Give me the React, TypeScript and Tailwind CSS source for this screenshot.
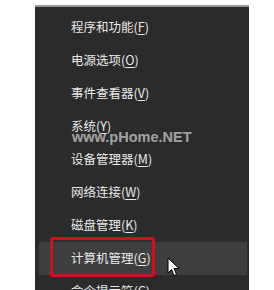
import React from "react";

const items: { label: string; key: string }[] = [
  { label: "程序和功能", key: "F" },
  { label: "电源选项", key: "O" },
  { label: "事件查看器", key: "V" },
  { label: "系统", key: "Y" },
  { label: "设备管理器", key: "M" },
  { label: "网络连接", key: "W" },
  { label: "磁盘管理", key: "K" },
  { label: "计算机管理", key: "G" },
  { label: "命令提示符", key: "C" },
];

export default function App() {
  return (
    <div
      className="relative w-[274px] h-[290px] overflow-hidden bg-white"
      style={{ fontFamily: '"Noto Sans CJK SC", "Liberation Sans", sans-serif' }}
    >
      <div className="ml-[35px] mt-[5px] w-[214px] h-[285px] bg-[#2b2b2b] border-t-2 border-[#9a9a9a] pt-[4px] pl-[4px] pr-[2px]">
        {items.map((it, i) => (
          <div
            key={it.label}
            className={`h-[33px] flex items-center pl-[32px] text-[12.5px] text-[#e8e8e8] ${
              i === 7 ? "bg-[#3e3e3e]" : ""
            }`}
          >
            <span>
              {it.label}(<span className="underline underline-offset-2">{it.key}</span>)
            </span>
          </div>
        ))}
      </div>

      <div
        className="absolute left-[72px] top-[130px] text-[14.5px] font-bold text-[#a0a0a0] leading-none"
        style={{ fontFamily: '"Liberation Sans", Arial, sans-serif', textShadow: "0 0 1px #444" }}
      >
        www.pHome.NET
      </div>

      <div className="absolute left-[50px] top-[237px] w-[105px] h-[40px] border-[3px] border-[#c4161c] rounded-[3px]" />

      <svg
        className="absolute left-[167px] top-[257px]"
        width="14"
        height="20"
        viewBox="0 0 14 20"
      >
        <path
          d="M1 1 L1 16 L4.5 12.5 L7 18.5 L9.5 17.5 L7 11.5 L12 11.5 Z"
          fill="#ffffff"
          stroke="#000000"
          strokeWidth="1"
          strokeLinejoin="round"
        />
      </svg>
    </div>
  );
}
